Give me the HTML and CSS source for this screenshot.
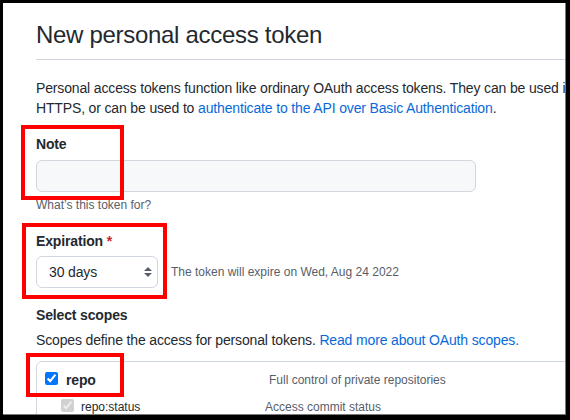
FILE: index.html
```html
<!DOCTYPE html>
<html lang="en">
<head>
<meta charset="utf-8">
<title>New personal access token</title>
<link rel="stylesheet" href="styles.css">
</head>
<body>
<div class="frame">
  <div class="page">
    <h1 class="subhead">New personal access token</h1>
    <p class="intro">Personal access tokens function like ordinary OAuth access tokens. They can be used instead of a password for Git over<br>HTTPS, or can be used to <a href="#">authenticate to the API over Basic Authentication</a>.</p>

    <div class="group group-note">
      <label class="label">Note</label>
      <div class="input"></div>
      <p class="note">What’s this token for?</p>
    </div>

    <div class="group group-exp">
      <label class="label">Expiration <span class="req">*</span></label>
      <div class="exp-row">
        <div class="select">
          <span>30 days</span>
          <svg class="select-arrows" width="16" height="16" viewBox="0 0 16 16"><path d="M4.427 9.427l3.396 3.396a.25.25 0 00.354 0l3.396-3.396A.25.25 0 0011.396 9H4.604a.25.25 0 00-.177.427zM4.427 6.573l3.396-3.396a.25.25 0 01.354 0l3.396 3.396A.25.25 0 0111.396 7H4.604a.25.25 0 01-.177-.427z" fill="#57606a"/></svg>
        </div>
        <span class="note">The token will expire on Wed, Aug 24 2022</span>
      </div>
    </div>

    <h3 class="scopes-title">Select scopes</h3>
    <p class="scopes-desc">Scopes define the access for personal tokens. <a href="#">Read more about OAuth scopes.</a></p>

    <div class="scopes-box">
      <div class="scope-row main">
        <label class="scope-name"><input type="checkbox" checked><span>repo</span></label>
        <span class="scope-desc">Full control of private repositories</span>
      </div>
      <div class="scope-row sub">
        <label class="scope-name"><input type="checkbox" checked disabled><span>repo:status</span></label>
        <span class="scope-desc">Access commit status</span>
      </div>
    </div>
  </div>

  <div class="mark mark-note"></div>
  <div class="mark mark-exp"></div>
  <div class="mark mark-repo"></div>
</div>
</body>
</html>
```

FILE: styles.css
```css
* { box-sizing: border-box; }

html, body {
  margin: 0;
  background: #000;
}

body {
  padding: 3px 4px 5px 3px;
  font-family: "Segoe UI", "Liberation Sans", Arial, sans-serif;
  color: #24292f;
  font-size: 14px;
  line-height: 20px;
  letter-spacing: -0.15px;
}

.frame {
  position: relative;
  width: 563px;
  height: 412px;
  background: #fff;
  border-right: 1px solid #7a7a7a;
  border-bottom: 1px solid #7a7a7a;
  overflow: hidden;
  padding: 14px 0 0 33px;
}

.page {
  width: 640px;
}

a {
  color: #0969da;
  text-decoration: none;
}

.subhead {
  margin: 0;
  font-size: 24px;
  font-weight: 400;
  line-height: 36px;
  letter-spacing: -0.3px;
  padding-bottom: 6px;
  border-bottom: 1px solid #d0d7de;
}

.intro {
  margin: 18px 0 0;
  white-space: nowrap;
}

.group-note { margin-top: 16px; }
.group-exp { margin-top: 17px; }

.label {
  display: block;
  font-weight: 600;
}

.req { color: #cf222e; }

.input {
  margin-top: 6px;
  width: 440px;
  height: 32px;
  background: #f6f8fa;
  border: 1px solid #d0d7de;
  border-radius: 6px;
}

.note {
  margin: 4px 0 0;
  font-size: 12px;
  line-height: 18px;
  letter-spacing: 0;
  color: #57606a;
}

.exp-row {
  margin-top: 5px;
  display: flex;
  align-items: center;
  gap: 13px;
}

.exp-row .note { margin: 0; }

.select {
  width: 122px;
  height: 32px;
  border: 1px solid #d0d7de;
  border-radius: 6px;
  background: #fff;
  display: flex;
  align-items: center;
  justify-content: space-between;
  padding: 0 1px 0 12px;
}

.select-arrows { display: block; }

.scopes-title {
  margin: 17px 0 0;
  font-size: 14px;
  font-weight: 600;
}

.scopes-desc {
  margin: 5px 0 0;
}

.scopes-box {
  margin-top: 11px;
  border: 1px solid #d0d7de;
  border-radius: 6px;
  height: 80px;
}

.scope-row {
  display: grid;
}

.scope-row.main {
  grid-template-columns: 224px 1fr;
  padding: 8px 0 0 8px;
}

.scope-row.sub {
  grid-template-columns: 204px 1fr;
  padding: 7px 0 0 24px;
  font-size: 12px;
  letter-spacing: 0;
}

.scope-name {
  display: flex;
  align-items: flex-start;
}

.scope-name input {
  margin: 2px 0 0;
  width: 13px;
  height: 13px;
}

.main .scope-name { gap: 8px; font-weight: 600; }
.sub .scope-name { gap: 7px; }

.scope-desc {
  font-size: 12px;
  letter-spacing: 0;
  color: #57606a;
}

.mark {
  position: absolute;
  border: 4px solid #ff0000;
}

.mark-note { left: 18px; top: 122px; width: 103px; height: 75px; }
.mark-exp { left: 19px; top: 220px; width: 145px; height: 76px; }
.mark-repo { left: 23px; top: 350px; width: 98px; height: 44px; }
```
